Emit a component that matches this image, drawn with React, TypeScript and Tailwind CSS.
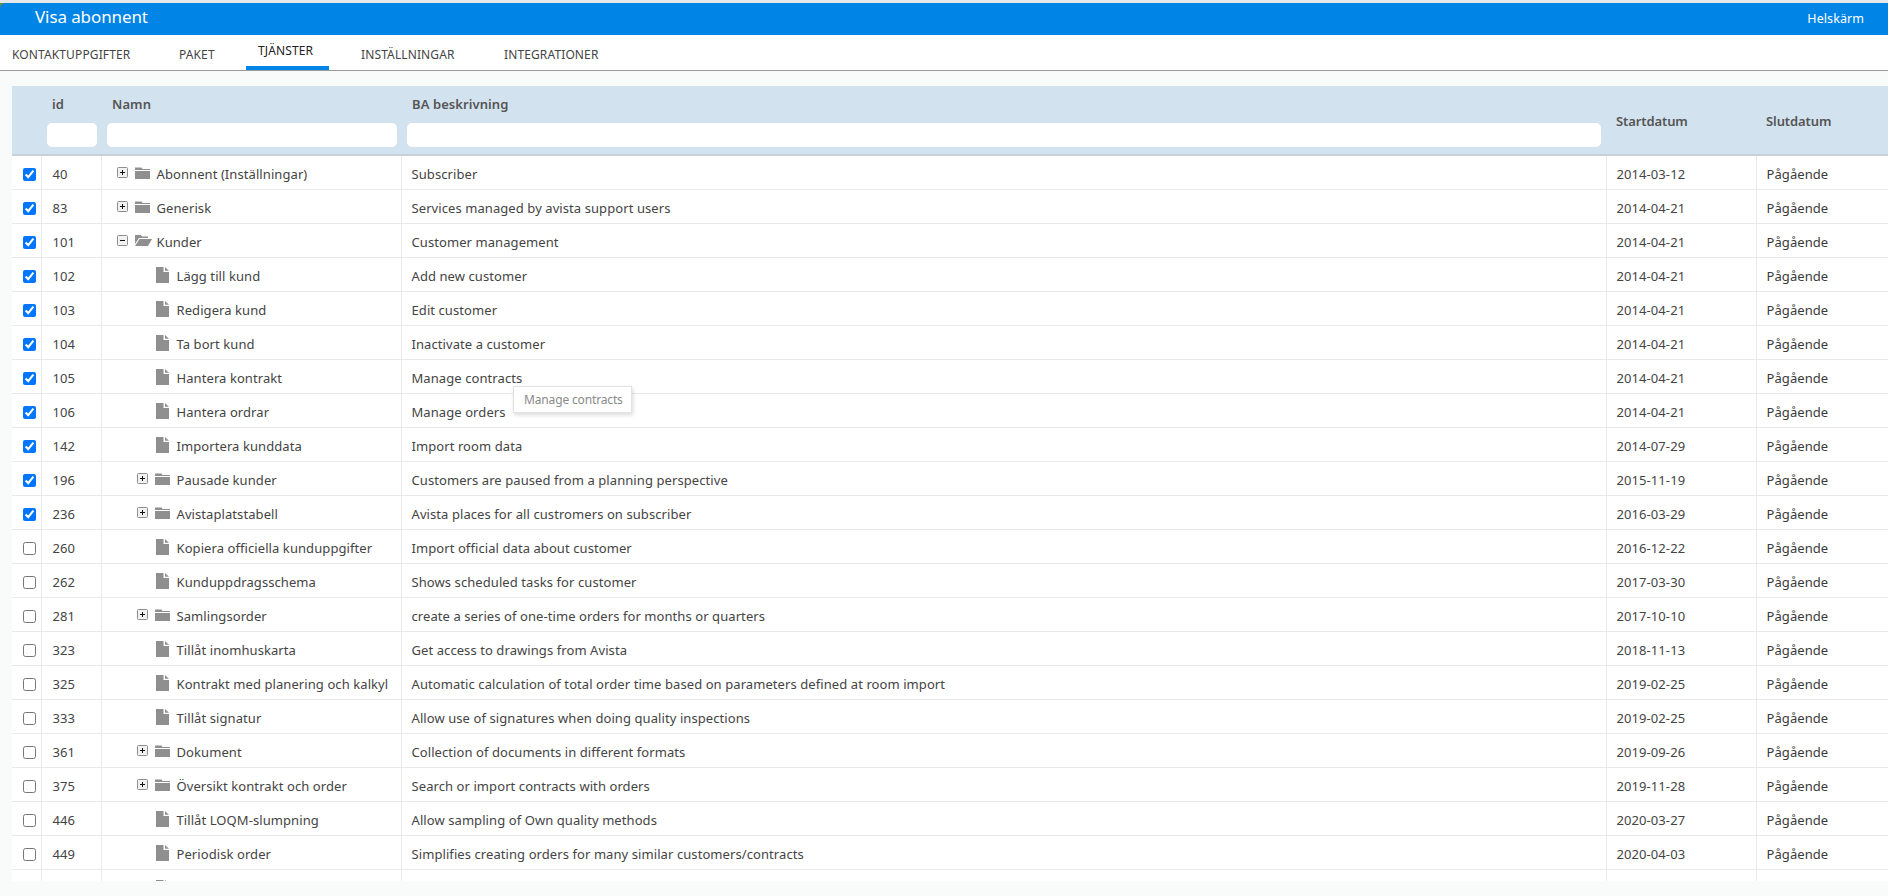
const rows: { id: number; name: string; desc: string; start: string; level: number; kind: 'closed' | 'open' | 'file'; checked?: boolean }[] = [
  { id: 40, name: 'Abonnent (Inställningar)', desc: 'Subscriber', start: '2014-03-12', level: 0, kind: 'closed', checked: true },
  { id: 83, name: 'Generisk', desc: 'Services managed by avista support users', start: '2014-04-21', level: 0, kind: 'closed', checked: true },
  { id: 101, name: 'Kunder', desc: 'Customer management', start: '2014-04-21', level: 0, kind: 'open', checked: true },
  { id: 102, name: 'Lägg till kund', desc: 'Add new customer', start: '2014-04-21', level: 1, kind: 'file', checked: true },
  { id: 103, name: 'Redigera kund', desc: 'Edit customer', start: '2014-04-21', level: 1, kind: 'file', checked: true },
  { id: 104, name: 'Ta bort kund', desc: 'Inactivate a customer', start: '2014-04-21', level: 1, kind: 'file', checked: true },
  { id: 105, name: 'Hantera kontrakt', desc: 'Manage contracts', start: '2014-04-21', level: 1, kind: 'file', checked: true },
  { id: 106, name: 'Hantera ordrar', desc: 'Manage orders', start: '2014-04-21', level: 1, kind: 'file', checked: true },
  { id: 142, name: 'Importera kunddata', desc: 'Import room data', start: '2014-07-29', level: 1, kind: 'file', checked: true },
  { id: 196, name: 'Pausade kunder', desc: 'Customers are paused from a planning perspective', start: '2015-11-19', level: 1, kind: 'closed', checked: true },
  { id: 236, name: 'Avistaplatstabell', desc: 'Avista places for all custromers on subscriber', start: '2016-03-29', level: 1, kind: 'closed', checked: true },
  { id: 260, name: 'Kopiera officiella kunduppgifter', desc: 'Import official data about customer', start: '2016-12-22', level: 1, kind: 'file' },
  { id: 262, name: 'Kunduppdragsschema', desc: 'Shows scheduled tasks for customer', start: '2017-03-30', level: 1, kind: 'file' },
  { id: 281, name: 'Samlingsorder', desc: 'create a series of one-time orders for months or quarters', start: '2017-10-10', level: 1, kind: 'closed' },
  { id: 323, name: 'Tillåt inomhuskarta', desc: 'Get access to drawings from Avista', start: '2018-11-13', level: 1, kind: 'file' },
  { id: 325, name: 'Kontrakt med planering och kalkyl', desc: 'Automatic calculation of total order time based on parameters defined at room import', start: '2019-02-25', level: 1, kind: 'file' },
  { id: 333, name: 'Tillåt signatur', desc: 'Allow use of signatures when doing quality inspections', start: '2019-02-25', level: 1, kind: 'file' },
  { id: 361, name: 'Dokument', desc: 'Collection of documents in different formats', start: '2019-09-26', level: 1, kind: 'closed' },
  { id: 375, name: 'Översikt kontrakt och order', desc: 'Search or import contracts with orders', start: '2019-11-28', level: 1, kind: 'closed' },
  { id: 446, name: 'Tillåt LOQM-slumpning', desc: 'Allow sampling of Own quality methods', start: '2020-03-27', level: 1, kind: 'file' },
  { id: 449, name: 'Periodisk order', desc: 'Simplifies creating orders for many similar customers/contracts', start: '2020-04-03', level: 1, kind: 'file' },
]

const tabs = [
  { label: 'KONTAKTUPPGIFTER', width: 'w-[167px]' },
  { label: 'PAKET', width: 'w-[79px]' },
  { label: 'TJÄNSTER', width: 'w-[83px]', active: true },
  { label: 'INSTÄLLNINGAR', width: 'w-[143px] ml-[20px]' },
  { label: 'INTEGRATIONER', width: 'w-[120px]' },
]

const Toggle = ({ open }: { open: boolean }) => (
  <svg width="11" height="11" viewBox="0 0 11 11" className="shrink-0">
    <rect x="0.5" y="0.5" width="10" height="10" rx="1" fill="#f1f1f1" stroke="#8e8e8e" />
    <path d={open ? 'M3 5.5h5' : 'M3 5.5h5M5.5 3v5'} stroke="#111" strokeWidth="1" />
  </svg>
)

const FolderIcon = () => (
  <svg width="15" height="12" viewBox="0 0 15 12" className="shrink-0">
    <path d="M0 0.5 H6.5 L7.5 2 H15 V3 H0 Z" fill="#8f8f8f" />
    <rect x="0" y="4" width="15" height="8" fill="#8f8f8f" />
  </svg>
)

const FolderOpenIcon = () => (
  <svg width="17" height="11" viewBox="0 0 17 11" className="shrink-0">
    <path d="M0 0 H6 L7 1.5 H13 V3 H4 L0 9 Z" fill="#8f8f8f" />
    <path d="M4.5 4 H17 L13 11 H0 Z" fill="#8f8f8f" />
  </svg>
)

const FileIcon = () => (
  <svg width="13" height="16" viewBox="0 0 13 16" className="shrink-0">
    <path d="M0 0 H7.5 V5 H13 V16 H0 Z" fill="#8f8f8f" />
    <path d="M9 0 L13 3.8 H9 Z" fill="#8f8f8f" />
  </svg>
)

const NameCell = ({ row }: { row: (typeof rows)[number] }) => {
  if (row.kind === 'file') {
    return (
      <div className="flex items-center pl-[54px]">
        <span className="-mt-[3px]"><FileIcon /></span>
        <span className="ml-2 whitespace-nowrap">{row.name}</span>
      </div>
    )
  }
  return (
    <div className={`flex items-center ${row.level === 1 ? 'pl-[35px]' : 'pl-[15px]'}`}>
      <span className="-mt-[4px] flex"><Toggle open={row.kind === 'open'} /></span>
      <span className="ml-[7px] -mt-[4px] flex w-[22px]">
        {row.kind === 'open' ? <FolderOpenIcon /> : <FolderIcon />}
      </span>
      <span className="whitespace-nowrap">{row.name}</span>
    </div>
  )
}

export default function App() {
  return (
    <div
      className="relative h-screen overflow-hidden bg-[#f9fbfb] text-[13px] tracking-[0.08px] text-[#444444]"
      style={{ fontFamily: '"Noto Sans", "Open Sans", sans-serif' }}
    >
      {/* Title bar */}
      <div className="h-[3px] bg-[#e6e8ea]" />
      <div className="bg-[#5c8f4a]">
        <div className="flex h-[32px] items-center justify-between rounded-tl-[6px] bg-[#0084e6] pl-[35px] pr-[24px] text-white">
          <span className="-mt-[5px] text-[17px] tracking-[-0.1px]">Visa abonnent</span>
          <span className="text-[12.5px]">Helskärm</span>
        </div>
      </div>

      {/* Tabs */}
      <div className="flex h-[36px] border-b border-[#999999] bg-white text-[12px] tracking-[0.12px]">
        {tabs.map((tab) => (
          <div
            key={tab.label}
            className={`flex h-[35px] items-center pl-3 ${tab.width} ${
              tab.active ? 'border-b-4 border-[#0084e6] text-[#222222]' : 'pt-[5px] text-[#444444]'
            }`}
          >
            {tab.label}
          </div>
        ))}
      </div>

      {/* Table */}
      <div className="ml-3 mt-[15px] h-[795px] overflow-hidden">
        <table className="w-full table-fixed border-collapse">
          <colgroup>
            <col className="w-[29px]" />
            <col className="w-[60px]" />
            <col className="w-[300px]" />
            <col className="w-[1205px]" />
            <col className="w-[150px]" />
            <col />
          </colgroup>
          <thead>
            <tr className="h-[69px] border-b-2 border-[#c9d2da] bg-[#d3e2ef] text-left font-semibold text-[#555555]">
              <th />
              <th className="pl-[6px] pr-1 align-top font-semibold">
                <div className="h-[37px] pl-[5px] pt-[9px]">id</div>
                <input className="block h-[24px] w-full rounded-[5px] bg-white" />
              </th>
              <th className="pl-[6px] pr-1 align-top font-semibold">
                <div className="h-[37px] pl-[5px] pt-[9px]">Namn</div>
                <input className="block h-[24px] w-full rounded-[5px] bg-white" />
              </th>
              <th className="pl-[6px] pr-[5px] align-top font-semibold">
                <div className="h-[37px] pl-[5px] pt-[9px]">BA beskrivning</div>
                <input className="block h-[24px] w-full rounded-[5px] bg-white" />
              </th>
              <th className="pl-[10px] pt-[3px] font-semibold tracking-[-0.1px]">Startdatum</th>
              <th className="pl-[10px] pt-[3px] font-semibold tracking-[-0.1px]">Slutdatum</th>
            </tr>
          </thead>
          <tbody className="bg-white">
            {rows.map((row) => (
              <tr key={row.id} className="h-[34px] border-b border-[#e9e9e9]">
                <td className="border-r border-[#e9e9e9] pl-[11px] pt-[5px]">
                  <input type="checkbox" defaultChecked={row.checked} className="block" />
                </td>
                <td className="border-r border-[#e9e9e9] pl-[11px] pt-[5px]">{row.id}</td>
                <td className="border-r border-[#e9e9e9] pt-[5px]"><NameCell row={row} /></td>
                <td className="border-r border-[#e9e9e9] pl-[10px] pt-[5px] whitespace-nowrap">{row.desc}</td>
                <td className="border-r border-[#e9e9e9] pl-[10px] pt-[5px]">{row.start}</td>
                <td className="pl-[10px] pt-[5px] text-[#3a3a3a]">Pågående</td>
              </tr>
            ))}
            <tr className="h-[34px]">
              <td className="border-r border-[#e9e9e9]" />
              <td className="border-r border-[#e9e9e9]" />
              <td className="border-r border-[#e9e9e9] align-top pl-[54px] pt-[10px]"><FileIcon /></td>
              <td className="border-r border-[#e9e9e9]" />
              <td className="border-r border-[#e9e9e9]" />
              <td />
            </tr>
          </tbody>
        </table>
      </div>

      {/* Tooltip over the hovered description */}
      <div className="absolute left-[513px] top-[386px] flex h-[27px] w-[119px] items-center border border-[#e3e3e3] bg-white pl-[10px] text-[12px] tracking-[-0.15px] text-[#8a8a8a] shadow-[1px_2px_4px_rgba(0,0,0,0.15)]">
        Manage contracts
      </div>
    </div>
  )
}
